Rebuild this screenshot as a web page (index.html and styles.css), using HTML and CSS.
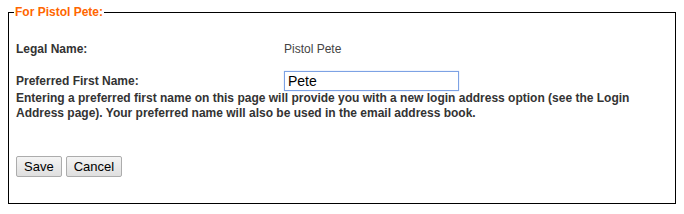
FILE: index.html
```html
<!DOCTYPE html>
<html lang="en">
<head>
  <meta charset="UTF-8" />
  <title>Preferred Name</title>
  <link rel="stylesheet" href="styles.css">
</head>
<body>
  <form class="name-form">
    <fieldset class="name-box">
      <legend>For Pistol Pete:</legend>

      <div class="row">
        <span class="label">Legal Name:</span>
        <span class="value">Pistol Pete</span>
      </div>

      <div class="row row-input">
        <label class="label" for="pref-name">Preferred First Name:</label>
        <input type="text" id="pref-name" class="text-input" value="Pete" />
      </div>
      <p class="help">Entering a preferred first name on this page will provide you with a new login address option (see the Login Address page). Your preferred name will also be used in the email address book.</p>

      <div class="buttons">
        <button type="button" class="btn">Save</button>
        <button type="button" class="btn">Cancel</button>
      </div>
    </fieldset>
  </form>
</body>
</html>
```

FILE: styles.css
```css
body {
  margin: 5px 8px 8px;
  font-family: "Liberation Sans", Arial, sans-serif;
  font-size: 12px;
  color: #333;
  background: #fff;
}

.name-box {
  margin: 0;
  padding: 0 7px;
  border: 1px solid #000;
  box-sizing: border-box;
  height: 199px;
  width: 668px;
}

.name-box legend {
  padding: 0 1px;
  margin-left: -2px;
  color: #ff6600;
  font-weight: bold;
  font-size: 12px;
  line-height: 14px;
}

.row {
  display: flex;
  align-items: center;
  line-height: 15px;
}

.row:first-of-type {
  margin-top: 23px;
}

.label {
  width: 268px;
  font-weight: bold;
  color: #333;
}

.value {
  color: #444;
}

.row-input {
  margin-top: 14px;
}

.text-input {
  width: 175px;
  height: 20px;
  box-sizing: border-box;
  margin: 0;
  padding: 0 3px;
  border: 1px solid #7da2e4;
  outline: none;
  box-shadow: 0 0 1px #a9c2ef;
  font-family: "Liberation Sans", Arial, sans-serif;
  font-size: 14px;
  color: #000;
}

.help {
  margin: 0;
  font-weight: bold;
  line-height: 15px;
  color: #333;
}

.buttons {
  margin-top: 35px;
  display: flex;
  gap: 4px;
}

.btn {
  height: 21px;
  padding: 0 7px;
  font-family: "Liberation Sans", Arial, sans-serif;
  font-size: 13px;
  color: #000;
  background: linear-gradient(#f4f4f4, #dfdfdf);
  border: 1px solid #acacac;
  border-radius: 2px;
}
```
